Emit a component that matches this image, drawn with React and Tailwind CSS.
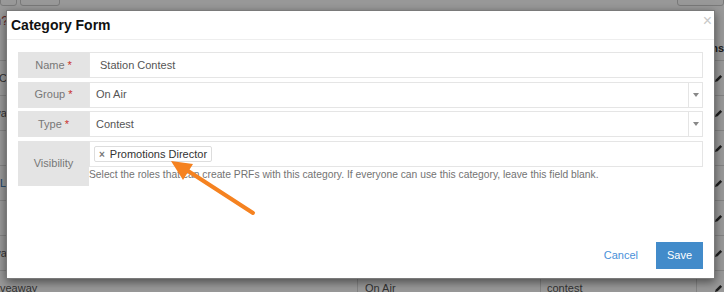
const rows = [
  { name: "Contest", nameCls: "-ml-[1px] text-[#555]", group: "On Air", type: "contest" },
  { name: "Giveaway", nameCls: "-ml-[36px] text-[#555]", group: "On Air", type: "giveaway" },
  { name: "", nameCls: "", group: "Digital", type: "contest" },
  { name: "Listener Lunch", nameCls: "ml-0 text-[#2a6fb0]", group: "Events", type: "event" },
  { name: "", nameCls: "", group: "On Air", type: "contest" },
  { name: "Giveaway", nameCls: "-ml-[36px] text-[#555]", group: "Digital", type: "giveaway" },
  { name: "Giveaway", nameCls: "-ml-[11px] text-[#555]", group: "On Air", type: "contest" },
];

function Pencil() {
  return (
    <svg width="9" height="9" viewBox="0 0 10 10" className="text-[#333]">
      <path d="M1 9 L2 6 L7 1 L9 3 L4 8 Z" fill="currentColor" />
    </svg>
  );
}

function BackgroundPage() {
  return (
    <div className="flex flex-col text-[11px]">
      <div className="flex h-[6px] items-end">
        <div className="w-[17px] h-[30px] border border-[#ccc] rounded-b-[3px] shrink-0" />
        <div className="ml-[3px] w-[40px] h-[30px] border border-[#ccc] rounded-b-[3px] shrink-0" />
        <div className="ml-auto w-[47px] h-[30px] border border-[#ccc] rounded-b-[3px] shrink-0" />
      </div>
      <div className="h-[30px] flex items-center text-[13px] text-[#a94442]">
        <span className="-ml-[6px]">n?</span>
      </div>
      <div className="h-[25px] flex items-center font-bold text-[#333] border-b border-[#ddd]">
        <div className="w-[358px]" />
        <div className="w-[183px]" />
        <div className="w-[156px]" />
        <div className="pl-[5px] whitespace-nowrap">Actions</div>
      </div>
      {rows.map((r, i) => (
        <div key={i} className="h-[35px] flex items-center border-b border-[#ddd] shrink-0">
          <div className="w-[358px] h-full flex items-center border-r border-[#ddd] overflow-hidden whitespace-nowrap">
            <span className={r.nameCls}>{r.name}</span>
          </div>
          <div className="w-[183px] h-full flex items-center pl-[7px] border-r border-[#ddd] text-[#555]">{r.group}</div>
          <div className="w-[156px] h-full flex items-center pl-[6px] border-r border-[#ddd] text-[#555]">{r.type}</div>
          <div className="flex-1 h-full flex items-center justify-end pr-[1px]">
            <Pencil />
          </div>
        </div>
      ))}
    </div>
  );
}

function Label({ children, required, tall }) {
  return (
    <div
      className={
        "w-[71px] shrink-0 bg-[#e4e4e4] flex items-center justify-center text-[11px] text-[#777] " +
        (tall ? "h-[45px]" : "h-full")
      }
    >
      {children}
      {required && <span className="ml-[3px] text-[#c9302c]">*</span>}
    </div>
  );
}

function SelectBox({ value }) {
  return (
    <div className="flex-1 flex border border-[#e5e5e5] bg-white">
      <div className="flex-1 flex items-center pl-[6px] text-[11px] text-[#555]">{value}</div>
      <div className="w-[14px] flex items-center justify-center border-l border-[#e5e5e5]">
        <div className="w-0 h-0 border-l-[3px] border-r-[3px] border-t-[4px] border-l-transparent border-r-transparent border-t-[#888]" />
      </div>
    </div>
  );
}

function CategoryModal() {
  return (
    <div className="absolute left-[6px] top-[10px] w-[709px] h-[269px] bg-white border border-[#7a7a7a] shadow-[0_3px_9px_rgba(0,0,0,0.5)] flex flex-col">
      <div className="h-[29px] flex justify-between border-b border-[#eee]">
        <h4 className="pl-[4px] self-center text-[14px] font-bold text-[#111]">Category Form</h4>
        <button className="pr-[2px] pt-[2px] self-start text-[16px] leading-none text-[#c8c8c8]">×</button>
      </div>

      <div className="flex flex-col gap-[3.5px] pt-[12px] px-[11px]">
        <div className="flex h-[26px]">
          <Label required>Name</Label>
          <div className="flex-1 flex items-center border border-[#e5e5e5] pl-[10px] text-[11px] text-[#555]">
            Station Contest
          </div>
        </div>
        <div className="flex h-[26px]">
          <Label required>Group</Label>
          <SelectBox value="On Air" />
        </div>
        <div className="flex h-[26px]">
          <Label required>Type</Label>
          <SelectBox value="Contest" />
        </div>
        <div className="flex">
          <Label tall>Visibility</Label>
          <div className="flex-1 flex flex-col">
            <div className="h-[26px] flex items-center border border-[#e5e5e5] pl-[4px] pt-[1px]">
              <span className="h-[16px] flex items-center gap-[5px] border border-[#ddd] rounded-[2px] px-[4px] text-[11px] text-[#333]">
                <span className="text-[10px] font-bold text-[#777]">×</span>
                Promotions Director
              </span>
            </div>
            <p className="mt-[1px] text-[10.3px] leading-[14px] text-[#737373] whitespace-nowrap">
              Select the roles that can create PRFs with this category. If everyone can use this category, leave this field blank.
            </p>
          </div>
        </div>
      </div>

      <div className="mt-auto flex justify-end items-center gap-[18px] pr-[11px] pb-[9px]">
        <button className="text-[11px] text-[#4a90d9]">Cancel</button>
        <button className="w-[47px] h-[27px] bg-[#428bca] text-white text-[11px]">Save</button>
      </div>
    </div>
  );
}

function Arrow() {
  return (
    <svg className="absolute inset-0 pointer-events-none" width="724" height="292" viewBox="0 0 724 292">
      <line x1="253" y1="213" x2="185" y2="169" stroke="#f58220" strokeWidth="4" strokeLinecap="round" />
      <polygon points="171,161 193,164 183,180" fill="#f58220" />
    </svg>
  );
}

export default function App() {
  return (
    <div className="relative w-[724px] h-[292px] overflow-hidden bg-white font-['Liberation_Sans',Arial,sans-serif]">
      <BackgroundPage />
      <div className="absolute inset-0 bg-black/40" />
      <CategoryModal />
      <Arrow />
    </div>
  );
}
